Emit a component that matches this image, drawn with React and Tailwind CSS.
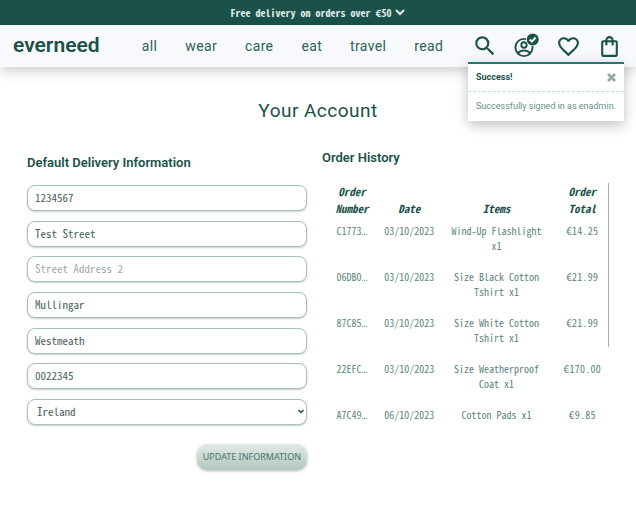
import React from "react";
import { MdSearch, MdFavoriteBorder, MdOutlineShoppingBag } from "react-icons/md";

const MONO = "font-['Noto_Sans_Mono_CJK_SC','Liberation_Mono',monospace]";
const SANS = "font-['Roboto','Liberation_Sans',sans-serif]";

const links = ["all", "wear", "care", "eat", "travel", "read"];

const fields = [
  { label: "Phone Number", value: "1234567" },
  { label: "Street Address 1", value: "Test Street" },
  { label: "Street Address 2", value: "" },
  { label: "Town or City", value: "Mullingar" },
  { label: "County", value: "Westmeath" },
  { label: "Postal Code", value: "0022345" },
];

const orders = [
  ["C1773", "03/10/2023", "Wind-Up Flashlight x1", "€14.25"],
  ["06DB0", "03/10/2023", "Size Black Cotton Tshirt x1", "€21.99"],
  ["87C85", "03/10/2023", "Size White Cotton Tshirt x1", "€21.99"],
  ["22EFC", "03/10/2023", "Size Weatherproof Coat x1", "€170.00"],
  ["A7C49", "06/10/2023", "Cotton Pads x1", "€9.85"],
];

function AccountIcon() {
  return (
    <svg viewBox="0 0 26 26" className="size-[26px]" fill="none" stroke="currentColor" strokeWidth="1.9">
      <circle cx="10" cy="14.5" r="8.600" />
      <circle cx="10" cy="12" r="2.700" />
      <path d="M4 20.300c1.500-1.900 3.600-2.800 6-2.800s4.500.9 6 2.800" />
      <circle cx="18.700" cy="6.500" r="6.800" fill="#f8f9fc" stroke="none" />
      <circle cx="18.700" cy="6.500" r="6" fill="currentColor" stroke="none" />
      <path d="m15.800 6.500 2.100 2.200 3.700-4.200" stroke="#f8f9fc" />
    </svg>
  );
}

function Header() {
  return (
    <header className="relative">
      <button className={`flex h-[25px] w-full items-center justify-center gap-1 bg-[#1a524a] text-[10px] font-bold text-[#e6eeec] ${MONO}`}>
        Free delivery on orders over €50
        <svg viewBox="0 0 10 7" className="h-[7px] w-[10px]" fill="none" stroke="currentColor" strokeWidth="2">
          <path d="m1 1 4 4 4-4" />
        </svg>
      </button>
      <div className="flex h-[42px] items-center justify-between bg-[#f8f9fc] pr-[14px] pl-[13px] shadow-[0_4px_12px_rgba(0,0,0,0.2)]">
        <a href="#home" className="w-[88px] text-[21px] font-semibold">everneed</a>
        <nav className="ml-10 flex gap-7 text-[14px] tracking-wide text-[#2b6157]">
          {links.map((l) => (
            <a key={l} href={`#${l}`}>{l}</a>
          ))}
        </nav>
        <div className="ml-7 flex items-center gap-4">
          <button aria-label="Search"><MdSearch size={26} /></button>
          <button aria-label="Account"><AccountIcon /></button>
          <button aria-label="Wishlist"><MdFavoriteBorder size={25} /></button>
          <button aria-label="Bag"><MdOutlineShoppingBag size={25} /></button>
        </div>
      </div>
      <div role="status" className="absolute top-[62px] right-3 w-[156px] border-t-2 border-[#1f7a73] bg-white text-[9px] shadow-[0_4px_12px_rgba(0,0,0,0.25)]">
        <div className="flex h-7 items-center justify-between border-b border-dashed border-[#b9e0d6] px-2">
          <strong>Success!</strong>
          <button aria-label="Close" className="text-[#8fa9a4]">
            <svg viewBox="0 0 9 9" className="size-[9px]" stroke="currentColor" strokeWidth="2.600">
              <path d="m1 1 7 7M8 1 1 8" />
            </svg>
          </button>
        </div>
        <p className="flex h-[29px] items-center px-2 whitespace-nowrap text-[#6d8e88]">Successfully signed in as enadmin.</p>
      </div>
    </header>
  );
}

const box =
  "block h-[26px] w-full rounded-lg border border-[#a9bfbb] bg-white pb-[2px] text-[11px] text-[#4b5f5c] shadow-[0_1px_2px_rgba(0,0,0,0.2)] placeholder:text-[#a3aaa8]";

function DeliveryForm() {
  return (
    <section>
      <h2 className="mt-[5px] text-[13px] leading-4 font-semibold">Default Delivery Information</h2>
      <form>
        <div className="mt-[14px] flex h-60 flex-col justify-between">
          {fields.map((f) => (
            <input key={f.label} aria-label={f.label} placeholder={f.label} defaultValue={f.value} className={`${box} px-[7px] ${MONO}`} />
          ))}
          <div className="relative">
            <select aria-label="Country" className={`${box} appearance-none px-[9px] ${MONO}`}>
              <option>Ireland</option>
            </select>
            <svg viewBox="0 0 8 6" className="pointer-events-none absolute top-[10px] right-[2px] h-[6px] w-2" fill="none" stroke="#1a524a" strokeWidth="1.500">
              <path d="m1.500 1 2.500 2.500 2.500-2.500" />
            </svg>
          </div>
        </div>
        <button className="mt-[19px] ml-auto block h-[26px] rounded-[10px] bg-linear-to-b from-[#e2eae7] to-[#b2c7bd] px-[6px] font-['Noto_Sans',sans-serif] text-[9px] text-[#46756c] shadow-[0_1px_3px_rgba(0,0,0,0.3)]">
          UPDATE INFORMATION
        </button>
      </form>
    </section>
  );
}

function OrderHistory() {
  return (
    <section>
      <h2 className="text-[13px] leading-4 font-semibold">Order History</h2>
      <div className="mt-[17px] h-[164px] border-r border-[#a9adac]">
        <table className={`w-full table-fixed text-center text-[10px] leading-[15px] text-[#5b857d] ${MONO}`}>
          <colgroup>
            <col className="w-[21%]" />
            <col className="w-[19%]" />
            <col className="w-[42%]" />
            <col className="w-[18%]" />
          </colgroup>
          <thead>
            <tr className="align-bottom text-[11px] leading-[17px] text-[#1a524a] italic">
              <th>Order Number</th>
              <th>Date</th>
              <th>Items</th>
              <th>Order Total</th>
            </tr>
          </thead>
          <tbody>
            {orders.map(([id, date, items, total]) => (
              <tr key={id} className="align-top">
                <td className="pt-[6px] pb-[10px]">
                  {id}
                  <span className="font-['Liberation_Mono',monospace] leading-none">…</span>
                </td>
                <td className="pt-[6px] pb-[10px]">{date}</td>
                <td className="px-3 pt-[6px] pb-[10px]">{items}</td>
                <td className="pt-[6px] pb-[10px] tracking-wide">{total}</td>
              </tr>
            ))}
          </tbody>
        </table>
      </div>
    </section>
  );
}

export default function App() {
  return (
    <div className={`min-h-screen bg-white text-[#1a524a] ${SANS}`}>
      <Header />
      <main className="px-[27px] pt-8 pb-10">
        <h1 className="text-center text-[19px] leading-6 tracking-wide">Your Account</h1>
        <div className="mt-[27px] grid grid-cols-[280fr_287fr] gap-[15px]">
          <DeliveryForm />
          <OrderHistory />
        </div>
      </main>
    </div>
  );
}
